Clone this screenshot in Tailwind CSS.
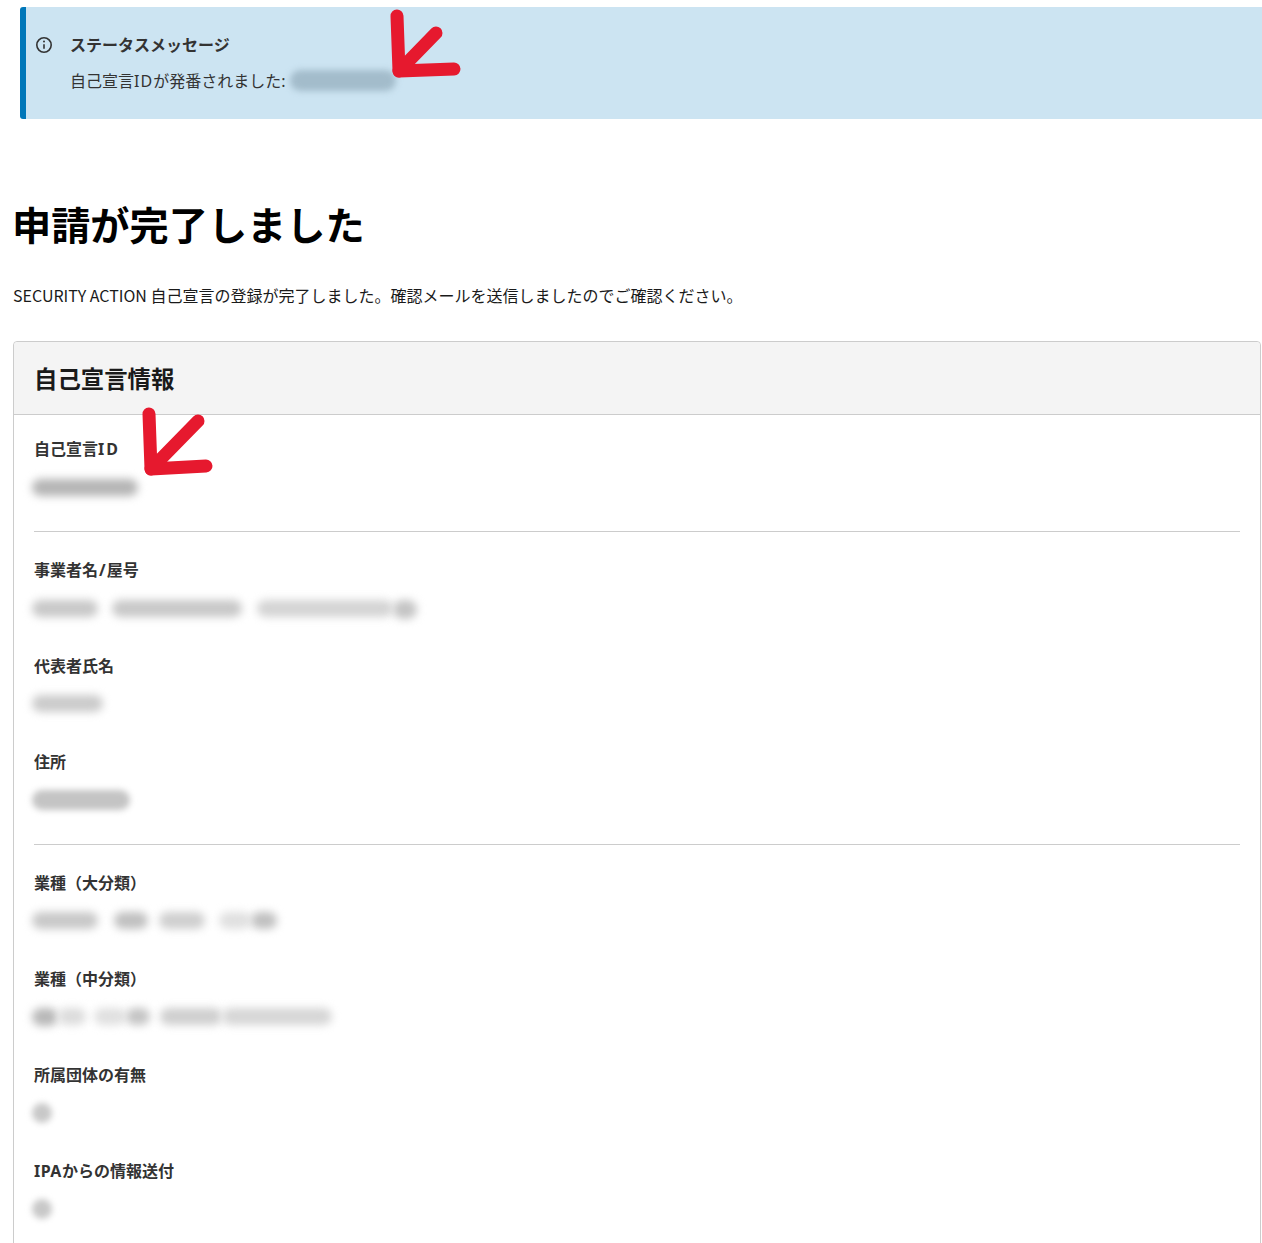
<!DOCTYPE html>
<html lang="ja">
<head>
    <meta charset="UTF-8">
    <title>申請が完了しました</title>
    <script src="https://cdn.jsdelivr.net/npm/@tailwindcss/browser@4"></script>
</head>
<body class="relative h-[1243px] overflow-hidden bg-white font-['Noto_Sans_CJK_JP','Noto_Sans',sans-serif] text-[#1a1a1a]">

    <!-- status message -->
    <div class="ml-5 mt-[7px] h-[112px] rounded-l-[3px] border-l-[6px] border-[#0077b9] bg-[#cce4f2] pl-[9px] pt-[25px] text-[#333]">
        <div class="flex items-center h-6">
            <svg class="w-[18px] h-[18px] mr-[17px] mt-[1px]" viewBox="0 0 18 18" fill="none" stroke="#333" stroke-width="1.6">
                <circle cx="9" cy="9" r="7.2"/>
                <path d="M9 8.2v4.6"/>
                <circle cx="9" cy="5.5" r="1" fill="#333" stroke="none"/>
            </svg>
            <span class="text-[16px] font-bold leading-6">ステータスメッセージ</span>
        </div>
        <div class="ml-[35px] mt-[12px] flex items-center h-6 text-[16px] leading-6">
            <span>自己宣言<span class="font-['Noto_Sans'] tracking-[1px]">ID</span>が発番されました<span class="font-['Noto_Sans']">:</span></span>
            <div class="ml-[5px] mt-[1px] h-[21px] w-[106px] rounded-full bg-[#a3bccb] blur-[3px]"></div>
        </div>
    </div>

    <h1 class="ml-[12px] mt-[74px] text-[39.2px] font-bold leading-[60px] text-black">申請が完了しました</h1>
    <p class="ml-[13px] mt-[30px] text-[16px] leading-6">SECURITY ACTION 自己宣言の登録が完了しました。確認メールを送信しましたのでご確認ください。</p>

    <!-- card -->
    <div class="ml-[13px] mt-[34px] w-[1248px] rounded-t-[4px] border border-[#ccc]">
        <div class="h-[73px] rounded-t-[4px] border-b border-[#ccc] bg-[#f4f4f4] pl-5 pt-[18px] text-[23.4px] font-bold leading-9">自己宣言情報</div>
        <div class="px-5 pt-[21px]">
            <div class="h-[95px]">
                <div class="text-[16px] font-bold leading-6 text-[#333]">自己宣言<span class="font-['Noto_Sans'] tracking-[2px]">ID</span></div>
                <div class="-ml-[2px] mt-[18px] flex"><div class="h-[17px] w-[106px] rounded-full bg-[#b5b5b5] blur-[4px]"></div></div>
            </div>
            <div class="border-t border-[#ccc] pt-[25px]">
                <div class="h-[96px]">
                    <div class="text-[16px] font-bold leading-6 text-[#333]">事業者名<span class="font-['Noto_Sans'] px-px">/</span>屋号</div>
                    <div class="-ml-[2px] mt-[18px] flex">
                        <div class="h-[17px] w-[66px] rounded-full bg-[#c8c8c8] blur-[4px]"></div>
                        <div class="ml-[14px] h-[17px] w-[130px] rounded-full bg-[#c8c8c8] blur-[4px]"></div>
                        <div class="ml-[15px] h-[17px] w-[136px] rounded-full bg-[#d4d4d4] blur-[4px]"></div>
                        <div class="h-[19px] w-[24px] rounded-full bg-[#c4c4c4] blur-[4px]"></div>
                    </div>
                </div>
                <div class="h-[96px]">
                    <div class="text-[16px] font-bold leading-6 text-[#333]">代表者氏名</div>
                    <div class="-ml-[2px] mt-[18px] flex"><div class="h-[17px] w-[71px] rounded-full bg-[#cbcbcb] blur-[4px]"></div></div>
                </div>
                <div class="h-[95px]">
                    <div class="text-[16px] font-bold leading-6 text-[#333]">住所</div>
                    <div class="-ml-[2px] mt-[17px] flex"><div class="h-[20px] w-[98px] rounded-full bg-[#c4c4c4] blur-[3px]"></div></div>
                </div>
            </div>
            <div class="border-t border-[#ccc] pt-[25px]">
                <div class="h-[96px]">
                    <div class="text-[16px] font-bold leading-6 text-[#333]">業種（大分類）</div>
                    <div class="-ml-[2px] mt-[18px] flex">
                        <div class="h-[17px] w-[66px] rounded-full bg-[#c8c8c8] blur-[4px]"></div>
                        <div class="ml-[16px] h-[17px] w-[34px] rounded-full bg-[#c0c0c0] blur-[4px]"></div>
                        <div class="ml-[11px] h-[17px] w-[46px] rounded-full bg-[#cfcfcf] blur-[4px]"></div>
                        <div class="ml-[14px] h-[17px] w-[32px] rounded-full bg-[#e0e0e0] blur-[4px]"></div>
                        <div class="h-[17px] w-[26px] rounded-full bg-[#c0c0c0] blur-[4px]"></div>
                    </div>
                </div>
                <div class="h-[96px]">
                    <div class="text-[16px] font-bold leading-6 text-[#333]">業種（中分類）</div>
                    <div class="-ml-[2px] mt-[18px] flex">
                        <div class="h-[18px] w-[26px] rounded-full bg-[#b8b8b8] blur-[4px]"></div>
                        <div class="h-[17px] w-[28px] rounded-full bg-[#dcdcdc] blur-[4px]"></div>
                        <div class="ml-[8px] h-[17px] w-[32px] rounded-full bg-[#e0e0e0] blur-[4px]"></div>
                        <div class="h-[17px] w-[24px] rounded-full bg-[#c4c4c4] blur-[4px]"></div>
                        <div class="ml-[10px] h-[17px] w-[62px] rounded-full bg-[#cfcfcf] blur-[4px]"></div>
                        <div class="h-[17px] w-[110px] rounded-full bg-[#d6d6d6] blur-[4px]"></div>
                    </div>
                </div>
                <div class="h-[96px]">
                    <div class="text-[16px] font-bold leading-6 text-[#333]">所属団体の有無</div>
                    <div class="-ml-[2px] mt-[17px] flex"><div class="h-[20px] w-[20px] rounded-full bg-[#c8c8c8] blur-[3px]"></div></div>
                </div>
                <div class="h-[96px]">
                    <div class="text-[16px] font-bold leading-6 text-[#333]"><span class="font-['Noto_Sans'] tracking-[0.5px]">IPA</span>からの情報送付</div>
                    <div class="-ml-[2px] mt-[16px] flex"><div class="h-[20px] w-[20px] rounded-full bg-[#c8c8c8] blur-[3px]"></div></div>
                </div>
            </div>
        </div>
    </div>

    <!-- red arrows drawn over the screenshot -->
    <svg class="absolute left-[385px] top-[5px] w-[80px] h-[80px]" viewBox="0 0 80 80" fill="none" stroke="#e6192e" stroke-width="13" stroke-linecap="round" stroke-linejoin="round">
        <path d="M12 11L14 66L69 64"/>
        <path d="M14 66L51 28"/>
    </svg>
    <svg class="absolute left-[135px] top-[403px] w-[80px] h-[80px]" viewBox="0 0 80 80" fill="none" stroke="#e6192e" stroke-width="13" stroke-linecap="round" stroke-linejoin="round">
        <path d="M14 11L16 66L71 63"/>
        <path d="M16 66L63 18"/>
    </svg>
</body>
</html>
